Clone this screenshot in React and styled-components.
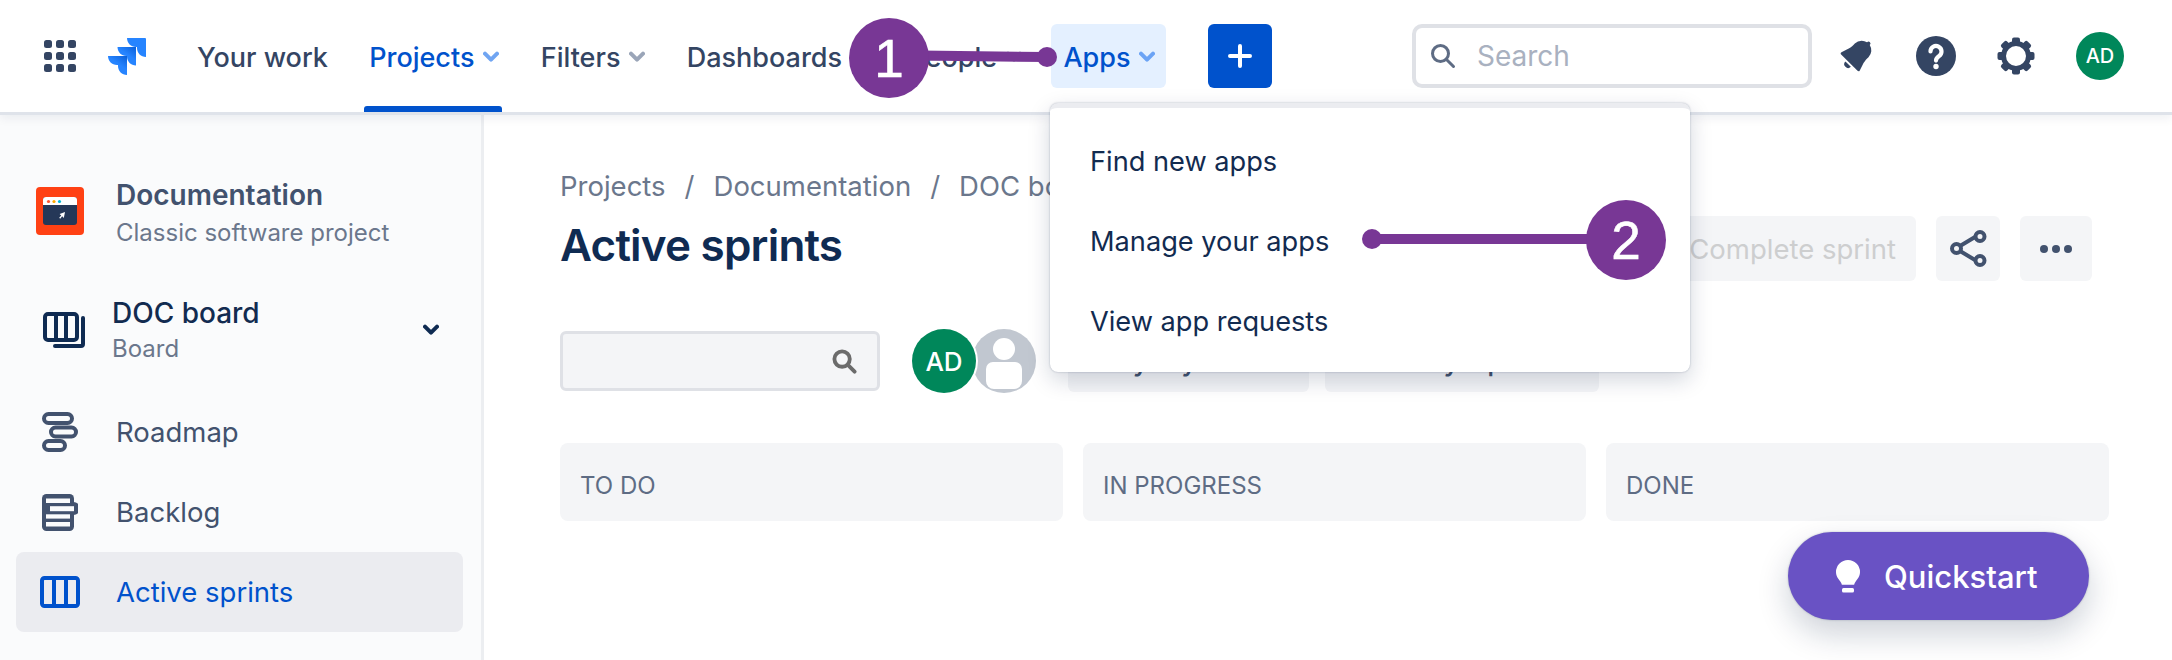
import React from "react";
import styled, { createGlobalStyle } from "styled-components";

const GlobalStyle = createGlobalStyle`
  html, body {
    margin: 0;
    padding: 0;
    background: #fff;
    overflow: hidden;
  }
  * { box-sizing: border-box; }
`;

const Page = styled.div`
  position: relative;
  width: 2172px;
  height: 660px;
  overflow: hidden;
  font-family: Inter, "Liberation Sans", sans-serif;
  color: #172b4d;
  background: #fff;
`;

/* top bar */
const TopBar = styled.header`
  position: relative;
  z-index: 2;
  height: 115px;
  padding: 0 48px 0 44px;
  display: flex;
  align-items: center;
  justify-content: space-between;
  background: #fff;
  border-bottom: 3px solid #dfe3ea;
  box-shadow: 0 3px 10px rgba(9, 30, 66, 0.07);
`;

const TopLeft = styled.div`
  display: flex;
  align-items: center;
`;

const TopRight = styled.div`
  display: flex;
  align-items: center;
`;

const LogoSlot = styled.div`
  display: flex;
  margin: 0 39px 0 32px;
`;

const NavList = styled.nav`
  display: flex;
  align-items: center;
  gap: 18.3px;
`;

const NavItem = styled.div`
  position: relative;
  height: 64px;
  padding: 2px 11px 0 12px;
  display: flex;
  align-items: center;
  gap: 9px;
  border-radius: 6px;
  font-size: 27px;
  font-weight: 500;
  white-space: nowrap;
  color: ${(p) => (p.$active || p.$open ? "#0052cc" : "#344563")};
  background: ${(p) => (p.$open ? "#e4f0ff" : "transparent")};
  &::after {
    content: "";
    display: ${(p) => (p.$active ? "block" : "none")};
    position: absolute;
    left: 7px;
    right: 8px;
    bottom: -24px;
    height: 6px;
    border-radius: 3px 3px 0 0;
    background: #0052cc;
  }
`;

const CreateButton = styled.button`
  width: 64px;
  height: 64px;
  margin-left: 42px;
  padding: 0;
  border: 0;
  border-radius: 6px;
  display: flex;
  align-items: center;
  justify-content: center;
  background: #0052cc;
`;

const SearchBox = styled.div`
  width: 400px;
  height: 64px;
  margin-right: 4px;
  padding: 0 14px;
  display: flex;
  align-items: center;
  gap: 21px;
  border: 4px solid #dfe1e6;
  border-radius: 10px;
  background: #fff;
  font-size: 28px;
  color: #a9b1c0;
`;

const IconSlot = styled.div`
  width: 80px;
  display: flex;
  justify-content: center;
`;

const Avatar = styled.div`
  position: relative;
  width: ${(p) => p.$size}px;
  height: ${(p) => p.$size}px;
  flex: none;
  border-radius: 50%;
  display: flex;
  align-items: center;
  justify-content: center;
  font-weight: 500;
  font-size: ${(p) => p.$font}px;
  color: #fff;
  background: #00875a;
`;

const TopAvatar = styled(Avatar)`
  margin-left: 20px;
`;

/* page below the bar */
const Body = styled.div`
  height: 545px;
  display: flex;
`;

const Sidebar = styled.aside`
  width: 484px;
  flex: none;
  padding: 60px 18px 0 16px;
  background: #fafbfc;
  border-right: 3px solid #eceef1;
`;

const ProjectRow = styled.div`
  padding-left: 20px;
  display: flex;
  align-items: flex-start;
  gap: 32px;
`;

const ProjectIconSlot = styled.div`
  display: flex;
  margin-top: 12px;
`;

const TextStack = styled.div`
  display: flex;
  flex-direction: column;
  gap: ${(p) => p.$gap}px;
  margin-top: ${(p) => p.$top || 0}px;
  flex: 1;
`;

const ProjectName = styled.div`
  font-size: 28px;
  line-height: 36px;
  font-weight: 600;
  color: #42526e;
`;

const SubLabel = styled.div`
  font-size: 24px;
  line-height: 32px;
  color: #6b778c;
`;

const BoardRow = styled.div`
  margin-top: 46px;
  padding: 0 24px 0 27px;
  display: flex;
  align-items: center;
  gap: 27px;
`;

const BoardName = styled.div`
  font-size: 28px;
  line-height: 36px;
  font-weight: 500;
  color: #122b50;
`;

const SideNav = styled.div`
  margin-top: 27px;
  display: flex;
  flex-direction: column;
`;

const SideItem = styled.div`
  height: 80px;
  padding-left: 24px;
  display: flex;
  align-items: center;
  gap: 36px;
  border-radius: 8px;
  font-size: 27.5px;
  color: ${(p) => (p.$active ? "#0052cc" : "#42526e")};
  background: ${(p) => (p.$active ? "#ebecf0" : "transparent")};
`;

const SideIcon = styled.div`
  width: 40px;
  display: flex;
  justify-content: center;
`;

const Main = styled.main`
  flex: 1;
  min-width: 0;
  padding: 55px 63px 0 76px;
`;

const Crumbs = styled.div`
  display: flex;
  gap: 19px;
  font-size: 27.5px;
  line-height: 32px;
  color: #6b778c;
`;

const TitleRow = styled.div`
  margin-top: 14px;
  padding-right: 17px;
  height: 65px;
  display: flex;
  align-items: center;
  justify-content: space-between;
`;

const Title = styled.h1`
  margin: 0;
  padding-bottom: 8px;
  font-size: 44px;
  line-height: 56px;
  font-weight: 600;
  letter-spacing: -0.8px;
  color: #0f2b52;
`;

const Actions = styled.div`
  display: flex;
  gap: 20px;
`;

const ActionButton = styled.button`
  width: ${(p) => (p.$width ? `${p.$width}px` : "auto")};
  height: 65px;
  padding: ${(p) => (p.$width ? "0" : "0 20px")};
  border: 0;
  border-radius: 6px;
  display: flex;
  align-items: center;
  justify-content: center;
  background: #f4f5f7;
  font-family: inherit;
  font-size: 27.5px;
  color: #cdcecf;
`;

const FilterRow = styled.div`
  margin-top: 48px;
  display: flex;
  align-items: flex-start;
`;

const FilterInput = styled.div`
  width: 320px;
  height: 60px;
  margin: 2px 32px 0 0;
  padding-right: 20px;
  display: flex;
  align-items: center;
  justify-content: flex-end;
  background: #f4f5f7;
  border: 3px solid #dfe1e6;
  border-radius: 6px;
`;

const AvatarGroup = styled.div`
  margin-right: 32px;
  display: flex;
`;

const GroupAvatar = styled(Avatar)`
  z-index: 1;
  box-shadow: 0 0 0 2px #fff;
`;

const GhostAvatar = styled(Avatar)`
  margin-left: -4px;
  background: #c1c7d0;
  overflow: hidden;
`;

const QuickFilter = styled.div`
  height: 63px;
  padding: 0 20px;
  margin-right: 16px;
  display: flex;
  align-items: center;
  border-radius: 6px;
  background: #f4f5f7;
  font-size: 27.5px;
  font-weight: 500;
  white-space: nowrap;
  color: #42526e;
`;

const Columns = styled.div`
  margin-top: 50px;
  display: flex;
  gap: 20px;
`;

const Column = styled.div`
  flex: 1;
  height: 78px;
  padding: 6px 0 0 20px;
  display: flex;
  align-items: center;
  border-radius: 8px;
  background: #f4f5f7;
  font-size: 24px;
  color: #5e6c84;
`;

/* things lying over the page */
const Menu = styled.div`
  position: absolute;
  z-index: 3;
  left: 1050px;
  top: 103px;
  width: 640px;
  height: 269px;
  padding-top: 13px;
  border-top: 5px solid #ebecf0;
  border-radius: 8px;
  background: #fff;
  box-shadow: 0 8px 22px rgba(9, 30, 66, 0.18), 0 0 2px rgba(9, 30, 66, 0.3);
`;

const MenuItem = styled.div`
  height: 80px;
  padding-left: 40px;
  display: flex;
  align-items: center;
  font-size: 27.2px;
  color: #122b50;
`;

const Quickstart = styled.button`
  position: absolute;
  z-index: 2;
  left: 1788px;
  top: 532px;
  width: 301px;
  height: 88px;
  padding: 0 0 0 48px;
  border: 0;
  border-radius: 44px;
  display: flex;
  align-items: center;
  gap: 24px;
  background: #6952c4;
  box-shadow: 0 14px 32px rgba(9, 30, 66, 0.2), 0 0 2px rgba(9, 30, 66, 0.3);
  font-family: inherit;
  font-size: 31px;
  font-weight: 500;
  color: #fff;
`;

const Marker = styled.div`
  position: absolute;
  z-index: 5;
  left: ${(p) => p.$x}px;
  top: ${(p) => p.$y}px;
  width: 80px;
  height: 80px;
  border-radius: 50%;
  display: flex;
  align-items: center;
  justify-content: center;
  background: #783795;
  font-family: "Liberation Sans", sans-serif;
  font-size: 53px;
  -webkit-text-stroke: 0.6px #fff;
  color: #fff;
`;

const LeaderLine = styled.svg`
  position: absolute;
  z-index: 4;
  left: 0;
  top: 0;
  pointer-events: none;
`;

const Chevron = ({ color = "#9aa5b8", size = 16, width = 4 }) => (
  <svg width={size} height={size * 0.7} viewBox="0 0 16 11" fill="none">
    <path d="M2 2.5l6 6 6-6" stroke={color} strokeWidth={width} strokeLinecap="round" strokeLinejoin="round" />
  </svg>
);

const GridIcon = () => (
  <svg width="32" height="32" viewBox="0 0 32 32" fill="#344563">
    {[0, 12, 24].map((y) =>
      [0, 12, 24].map((x) => <rect key={`${x}-${y}`} x={x} y={y} width="8" height="8" rx="2.5" />)
    )}
  </svg>
);

const JiraLogo = () => (
  <svg width="38" height="37" viewBox="0 0 38 37">
    <defs>
      <linearGradient id="jiraBlue" x1="1" y1="0" x2="0.3" y2="1">
        <stop offset="0" stopColor="#0a5fd8" />
        <stop offset="0.5" stopColor="#2684ff" />
      </linearGradient>
    </defs>
    <path d="M19 0h18a1 1 0 0 1 1 1v18c-5 0-9-4-9-9V9h-1c-5 0-9-4-9-9z" fill="#2684ff" />
    <path d="M9.5 9H28v18.5c-5 0-9-4-9-9V18h-.5c-5 0-9-4-9-9z" fill="url(#jiraBlue)" />
    <path d="M0 18h19v19c-5 0-9-4-9-9v-1h-1c-5 0-9-4-9-9z" fill="url(#jiraBlue)" />
  </svg>
);

const PlusIcon = () => (
  <svg width="24" height="24" viewBox="0 0 24 24" fill="none" stroke="#fff" strokeWidth="4" strokeLinecap="round">
    <path d="M12 2v20M2 12h20" />
  </svg>
);

const SearchIcon = ({ color, size, width }) => (
  <svg width={size} height={size} viewBox="0 0 26 26" fill="none" stroke={color} strokeWidth={width} strokeLinecap="round">
    <circle cx="10.5" cy="10.5" r="8" />
    <path d="M16.5 16.5l7 7" />
  </svg>
);

const BellIcon = () => (
  <svg width="46" height="46" viewBox="0 0 24 24" fill="#344563">
    <path d="M6.485 17.669a2 2 0 0 0 2.829 0l-2.829-2.83a2 2 0 0 0 0 2.83zm4.897-12.191l-.725.725c-.782.782-2.21 1.813-3.206 2.311l-3.017 1.509c-.495.248-.584.774-.187 1.171l8.556 8.556c.398.396.922.313 1.171-.188l1.51-3.016c.494-.988 1.526-2.42 2.311-3.206l.725-.726a5.048 5.048 0 0 0 .64-6.356 1.01 1.01 0 1 0-1.354-1.494c-.023.025-.046.049-.066.075a5.043 5.043 0 0 0-2.788-.84 5.036 5.036 0 0 0-3.57 1.479z" />
  </svg>
);

const HelpIcon = () => (
  <svg width="40" height="40" viewBox="0 0 40 40">
    <circle cx="20" cy="20" r="20" fill="#344563" />
    <path d="M14.500 15.500a5.500 5.500 0 1 1 8.600 4.500c-1.900 1.300-3.100 2.300-3.100 4.600" fill="none" stroke="#fff" strokeWidth="4.200" strokeLinecap="round" />
    <circle cx="20" cy="30.500" r="2.700" fill="#fff" />
  </svg>
);

const GearIcon = () => (
  <svg width="38" height="38" viewBox="0 0 38 38" fill="#344563">
    {[0, 45, 90, 135, 180, 225, 270, 315].map((a) => (
      <rect key={a} x="15" y="0.5" width="8" height="8" rx="2" transform={`rotate(${a} 19 19)`} />
    ))}
    <circle cx="19" cy="19" r="12.5" fill="none" stroke="#344563" strokeWidth="5" />
  </svg>
);

const ProjectIcon = () => (
  <svg width="48" height="48" viewBox="0 0 48 48">
    <rect width="48" height="48" rx="4" fill="#ff4114" />
    <rect x="7" y="10" width="34" height="28" rx="3" fill="#253858" />
    <path d="M7 18v-5a3 3 0 0 1 3-3h28a3 3 0 0 1 3 3v5z" fill="#fff" />
    <circle cx="12.500" cy="14.500" r="1.600" fill="#ff5630" />
    <circle cx="18" cy="14.500" r="1.600" fill="#ffab00" />
    <circle cx="23.500" cy="14.500" r="1.600" fill="#00b8d9" />
    <path d="M29 25l-1.200 6-1.600-1.700-2 2.400-1-.9 2-2.400-1.600-1.500z" fill="#fff" />
  </svg>
);

const BoardIcon = () => (
  <svg width="42" height="36" viewBox="0 0 42 36" fill="none" stroke="#0f2b52" strokeWidth="4">
    <rect x="2" y="2" width="32" height="26" rx="3" />
    <path d="M13 2v26M23 2v26" />
    <path d="M40 6v26a2 2 0 0 1-2 2H12" strokeLinecap="round" />
  </svg>
);

const RoadmapIcon = () => (
  <svg width="36" height="40" viewBox="0 0 36 40" fill="none" stroke="#42526e" strokeWidth="4">
    <rect x="2" y="2" width="28" height="9" rx="4.500" />
    <rect x="9" y="15.500" width="25" height="9" rx="4.500" />
    <rect x="2" y="29" width="21" height="9" rx="4.500" />
  </svg>
);

const BacklogIcon = () => (
  <svg width="36" height="37" viewBox="0 0 36 37">
    <rect width="32" height="37" rx="4.500" fill="#42526e" />
    <path d="M28 8h3.500a6.500 6.500 0 0 1 0 13H28z" fill="#42526e" />
    <g fill="#fafbfc">
      <rect x="4" y="4.500" width="24" height="4.500" />
      <rect x="8" y="12.200" width="24" height="5" />
      <rect x="4" y="20.300" width="24" height="4.300" />
      <rect x="4" y="28" width="24" height="4.500" />
    </g>
  </svg>
);

const SprintIcon = () => (
  <svg width="40" height="32" viewBox="0 0 40 32" fill="none" stroke="#0052cc" strokeWidth="4">
    <rect x="2" y="2" width="36" height="28" rx="2.500" />
    <path d="M14 2v28M26 2v28" />
  </svg>
);

const ShareIcon = () => (
  <svg width="37" height="37" viewBox="0 0 37 37" fill="none" stroke="#42526e" strokeWidth="4">
    <path d="M10 16l15-9M10 21l15 9" />
    <circle cx="6.500" cy="18.500" r="4.500" />
    <circle cx="30" cy="6.500" r="4.500" />
    <circle cx="30" cy="30.500" r="4.500" />
  </svg>
);

const MoreIcon = () => (
  <svg width="32" height="8" viewBox="0 0 32 8" fill="#42526e">
    <circle cx="4" cy="4" r="4" />
    <circle cx="16" cy="4" r="4" />
    <circle cx="28" cy="4" r="4" />
  </svg>
);

const PersonIcon = () => (
  <svg width="64" height="64" viewBox="0 0 64 64" fill="#fff">
    <circle cx="32" cy="20" r="11" />
    <path d="M21 33h22a7 7 0 0 1 7 7v12a8 8 0 0 1-8 8H22a8 8 0 0 1-8-8V40a7 7 0 0 1 7-7z" />
  </svg>
);

const BulbIcon = () => (
  <svg width="24" height="33" viewBox="0 0 24 33" fill="#fff">
    <path d="M12 0a12 12 0 0 1 12 12c0 4.500-2.500 7-4.300 9.500-.8 1-1.200 2-1.600 3.200H5.900c-.4-1.200-.8-2.200-1.600-3.200C2.500 19 0 16.500 0 12A12 12 0 0 1 12 0z" />
    <rect x="6" y="28" width="12" height="4.500" rx="1.500" />
  </svg>
);

export default function App() {
  const crumbs = ["Projects", "/", "Documentation", "/", "DOC board"];
  return (
    <Page>
      <GlobalStyle />
      <TopBar>
        <TopLeft>
          <GridIcon />
          <LogoSlot>
            <JiraLogo />
          </LogoSlot>
          <NavList>
            <NavItem>Your work</NavItem>
            <NavItem $active>
              Projects <Chevron color="#70a5f2" />
            </NavItem>
            <NavItem>
              Filters <Chevron />
            </NavItem>
            <NavItem>
              Dashboards <Chevron />
            </NavItem>
            <NavItem>
              People <Chevron />
            </NavItem>
            <NavItem $open>
              Apps <Chevron color="#6ba3f5" />
            </NavItem>
          </NavList>
          <CreateButton>
            <PlusIcon />
          </CreateButton>
        </TopLeft>
        <TopRight>
          <SearchBox>
            <SearchIcon color="#5e6c84" size={26} width={3} />
            Search
          </SearchBox>
          <IconSlot>
            <BellIcon />
          </IconSlot>
          <IconSlot>
            <HelpIcon />
          </IconSlot>
          <IconSlot>
            <GearIcon />
          </IconSlot>
          <TopAvatar $size={48} $font={20}>
            AD
          </TopAvatar>
        </TopRight>
      </TopBar>

      <Body>
        <Sidebar>
          <ProjectRow>
            <ProjectIconSlot>
              <ProjectIcon />
            </ProjectIconSlot>
            <TextStack $gap={4} $top={2}>
              <ProjectName>Documentation</ProjectName>
              <SubLabel>Classic software project</SubLabel>
            </TextStack>
          </ProjectRow>
          <BoardRow>
            <BoardIcon />
            <TextStack $gap={2}>
              <BoardName>DOC board</BoardName>
              <SubLabel>Board</SubLabel>
            </TextStack>
            <Chevron color="#0f2b52" />
          </BoardRow>
          <SideNav>
            <SideItem>
              <SideIcon>
                <RoadmapIcon />
              </SideIcon>
              Roadmap
            </SideItem>
            <SideItem>
              <SideIcon>
                <BacklogIcon />
              </SideIcon>
              Backlog
            </SideItem>
            <SideItem $active>
              <SideIcon>
                <SprintIcon />
              </SideIcon>
              Active sprints
            </SideItem>
          </SideNav>
        </Sidebar>

        <Main>
          <Crumbs>
            {crumbs.map((c, i) => (
              <span key={i}>{c}</span>
            ))}
          </Crumbs>
          <TitleRow>
            <Title>Active sprints</Title>
            <Actions>
              <ActionButton>Complete sprint</ActionButton>
              <ActionButton $width={64}>
                <ShareIcon />
              </ActionButton>
              <ActionButton $width={72}>
                <MoreIcon />
              </ActionButton>
            </Actions>
          </TitleRow>
          <FilterRow>
            <FilterInput>
              <SearchIcon color="#6b6b6b" size={25} width={4} />
            </FilterInput>
            <AvatarGroup>
              <GroupAvatar $size={64} $font={26}>
                AD
              </GroupAvatar>
              <GhostAvatar $size={64}>
                <PersonIcon />
              </GhostAvatar>
            </AvatarGroup>
            <QuickFilter>Only My Issues</QuickFilter>
            <QuickFilter>Recently Updated</QuickFilter>
          </FilterRow>
          <Columns>
            <Column>TO DO</Column>
            <Column>IN PROGRESS</Column>
            <Column>DONE</Column>
          </Columns>
        </Main>
      </Body>

      <Menu>
        <MenuItem>Find new apps</MenuItem>
        <MenuItem>Manage your apps</MenuItem>
        <MenuItem>View app requests</MenuItem>
      </Menu>

      <Quickstart>
        <BulbIcon />
        Quickstart
      </Quickstart>

      <LeaderLine width="2172" height="660" fill="#783795">
        <path d="M920 50.500L1047 52v10L920 60.500z" />
        <circle cx="1047" cy="57" r="10" />
        <rect x="1372" y="234" width="230" height="10" />
        <circle cx="1372" cy="239" r="10" />
      </LeaderLine>
      <Marker $x={849} $y={18}>1</Marker>
      <Marker $x={1586} $y={200}>2</Marker>
    </Page>
  );
}
